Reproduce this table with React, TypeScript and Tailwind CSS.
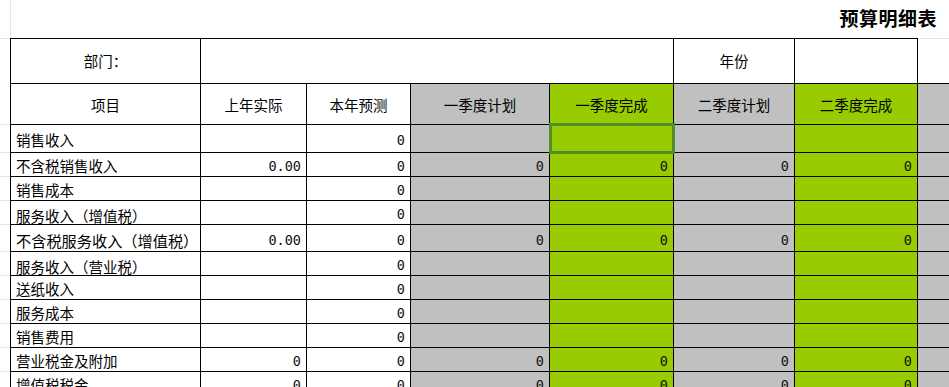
import React from "react";

const CJK = { fontFamily: '"Noto Sans CJK SC", "Noto Sans", sans-serif' };
const MONO = { fontFamily: '"DejaVu Sans Mono", "Liberation Mono", monospace' };

// column widths incl. right border; first column also carries the left border
const W = [
  "w-[191px]",
  "w-[106px]",
  "w-[104px]",
  "w-[139px]",
  "w-[124px]",
  "w-[121px]",
  "w-[123px]",
];

const BG = ["bg-white", "bg-white", "bg-white", "bg-[#c0c0c0]", "bg-[#99cc00]", "bg-[#c0c0c0]", "bg-[#99cc00]"];

interface DataRow {
  label: string;
  values: string[]; // c1..c6
  h: string;
  low?: boolean;
  big?: boolean;
}

const rows: DataRow[] = [
  { label: "销售收入", values: ["", "0", "", "", "", ""], h: "h-[28px]" },
  { label: "不含税销售收入", values: ["0.00", "0", "0", "0", "0", "0"], h: "h-[24px]" },
  { label: "销售成本", values: ["", "0", "", "", "", ""], h: "h-[24px]" },
  { label: "服务收入（增值税）", values: ["", "0", "", "", "", ""], h: "h-[24px]", low: true },
  { label: "不含税服务收入（增值税）", values: ["0.00", "0", "0", "0", "0", "0"], h: "h-[27px]", big: true },
  { label: "服务收入（营业税）", values: ["", "0", "", "", "", ""], h: "h-[24px]", low: true },
  { label: "送纸收入", values: ["", "0", "", "", "", ""], h: "h-[24px]" },
  { label: "服务成本", values: ["", "0", "", "", "", ""], h: "h-[24px]" },
  { label: "销售费用", values: ["", "0", "", "", "", ""], h: "h-[24px]" },
  { label: "营业税金及附加", values: ["0", "0", "0", "0", "0", "0"], h: "h-[24px]" },
  { label: "增值税税金", values: ["0", "0", "0", "0", "0", "0"], h: "h-[24px]" },
];

const headers = ["项目", "上年实际", "本年预测", "一季度计划", "一季度完成", "二季度计划", "二季度完成"];

export default function App() {
  return (
    <div className="w-[949px] h-[387px] overflow-hidden bg-white text-black" style={CJK}>
      {/* title */}
      <div className="flex h-[38px]">
        <div className="w-[11px] shrink-0 border-r border-[#e4e4e4]" />
        <div className="flex-1 flex items-center justify-end pr-[12px] pb-[3px]">
          <span className="text-[19px] font-bold leading-none tracking-[0.5px]">预算明细表</span>
        </div>
      </div>

      {/* 部门 / 年份 */}
      <div className="flex h-[46px]">
        <div className="w-[10px] shrink-0 border-t border-[#e4e4e4]" />
        <div className={`${W[0]} shrink-0 border border-black flex items-center justify-center text-[14.5px]`}>
          部门：
        </div>
        <div className="w-[473px] shrink-0 border-y border-r border-black" />
        <div className={`${W[5]} shrink-0 border-y border-r border-black flex items-center justify-center text-[14.5px]`}>
          年份
        </div>
        <div className={`${W[6]} shrink-0 border-y border-r border-black`} />
        <div className="flex-1 border-t border-[#e4e4e4] border-b border-b-black" />
      </div>

      {/* column headers */}
      <div className="flex h-[41px]">
        <div className="w-[10px] shrink-0 border-b border-[#e4e4e4]" />
        {headers.map((t, i) => (
          <div
            key={t}
            className={`${W[i]} ${BG[i]} shrink-0 border-r border-b border-black ${i === 0 ? "border-l" : ""} flex items-center justify-center pt-[2px] text-[14.5px]`}
          >
            {t}
          </div>
        ))}
        <div className="flex-1 bg-[#c0c0c0] border-b border-black" />
      </div>

      {/* data rows */}
      {rows.map((r, ri) => (
        <div key={r.label} className={`flex ${r.h}`}>
          <div className="w-[10px] shrink-0 border-b border-[#e4e4e4]" />
          <div
            className={`${W[0]} shrink-0 border-l border-r border-b border-black flex pl-[5px] whitespace-nowrap ${
              r.low ? "items-end" : "items-center pt-[3px]"
            } ${r.big ? "text-[15.2px] pt-[4px]" : "text-[14.5px]"}`}
          >
            <span className={r.low ? "leading-[18px] translate-y-[1px] block" : "leading-[18px]"}>{r.label}</span>
          </div>
          {r.values.map((v, vi) => {
            const selected = ri === 0 && vi === 3;
            return (
              <div
                key={vi}
                className={`${W[vi + 1]} ${BG[vi + 1]} ${selected ? "relative" : ""} shrink-0 border-r border-b border-black flex items-center justify-end pr-[5px] pt-[3px] text-[13.5px] leading-[18px] text-[#111]`}
                style={MONO}
              >
                {v}
                {selected && (
                  <div className="absolute z-10 -left-px -top-[2px] w-[126px] h-[31px] border-[3px] border-solid border-[#4f8e28] pointer-events-none" />
                )}
              </div>
            );
          })}
          <div className="flex-1 bg-[#c0c0c0] border-b border-black" />
        </div>
      ))}
    </div>
  );
}
